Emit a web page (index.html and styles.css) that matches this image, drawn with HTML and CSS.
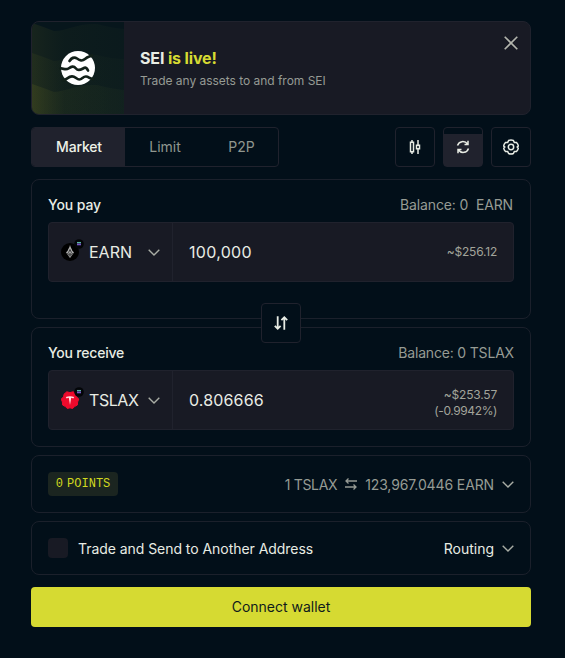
FILE: index.html
```
<!DOCTYPE html>
<html lang="en">
<head>
    <meta charset="UTF-8">
    <title>Swap</title>
    <link rel="stylesheet" href="styles.css">
</head>
<body>
<main class="swap">
    <section class="banner">
        <div class="banner-art">
            <svg width="92" height="92" viewBox="0 0 92 92">
                <defs>
                    <linearGradient id="wave" x1="0" y1="0" x2="1" y2="0">
                        <stop offset="0" stop-color="#434b20" stop-opacity=".6"/>
                        <stop offset=".35" stop-color="#26341f" stop-opacity=".45"/>
                        <stop offset="1" stop-color="#1b2c22" stop-opacity=".4"/>
                    </linearGradient>
                </defs>
                <rect width="92" height="92" fill="#07161c"/>
                <path d="M0 1Q12 5 22 9C35 9 45 1 65 2Q80 6 92 7V92H0Z" fill="url(#wave)" opacity=".45"/>
                <path d="M0 31Q12 35 22 39C35 38 45 31 65 33Q80 37 92 37V92H0Z" fill="url(#wave)" opacity=".4"/>
                <path d="M0 62Q12 66 22 70C35 69 45 62 65 63Q80 67 92 68V92H0Z" fill="url(#wave)" opacity=".8"/>
                <circle cx="46" cy="46" r="17" fill="#fff"/>
                <g fill="none" stroke="#122019" stroke-width="2.7" stroke-linecap="round" stroke-linejoin="round">
                    <path d="M37.5 39C39.5 36 42 34.5 45 36.5S50 39.5 53 37S57 35 60 33.5"/>
                    <path d="M28.5 46.5C31 46 33.5 48.5 36.5 46.5S41.5 43.5 44 46.5S49 47.5 51.5 46.2S55 46.5 56 48.5"/>
                    <path d="M31 58.5C34 58 36.5 54.3 40 54.3S44.5 57.5 47.3 57.5S51 54.3 54 54.5S57 56.5 61 57"/>
                </g>
            </svg>
        </div>
        <div class="banner-text">
            <h1>SEI <span>is live!</span></h1>
            <p>Trade any assets to and from SEI</p>
        </div>
        <button class="close" aria-label="Close">
            <svg width="14" height="14" viewBox="0 0 14 14"><path d="M.7.7l12.6 12.6M13.3.7L.7 13.3"/></svg>
        </button>
    </section>

    <div class="toolbar">
        <nav class="tabs">
            <a class="tab tab-market active">Market</a>
            <a class="tab tab-limit">Limit</a>
            <a class="tab tab-p2p">P2P</a>
        </nav>
        <div class="tools">
            <button class="tool" aria-label="Chart">
                <svg width="16" height="16" viewBox="0 0 16 16"><path d="M5 1v2M5 13v2M3.5 3.2h3v9.6h-3zM11 1v5M11 10v5M9.5 6.2h3v3.6h-3z"/></svg>
            </button>
            <button class="tool tool-refresh" aria-label="Refresh">
                <svg width="16" height="16" viewBox="0 0 16 16"><path d="M2.5 6.5C4 2 9.5 1.2 12.7 5M13 1.8v3.6H9.5M13.5 9.5C12 14 6.5 14.8 3.3 11M3 14.2v-3.6h3.5"/></svg>
            </button>
            <button class="tool" aria-label="Settings">
                <svg width="16" height="16" viewBox="0 0 16 16"><path d="M5.6 1.5Q8 .5 10.4 1.5L11.3 3.4L13.5 3.5Q15.2 5.2 15.3 7L14.2 8L15.3 9Q15.2 10.8 13.5 12.5L11.3 12.6L10.4 14.5Q8 15.5 5.6 14.5L4.7 12.6L2.5 12.5Q.8 10.8.7 9L1.8 8L.7 7Q.8 5.2 2.5 3.5L4.7 3.4Z"/><circle cx="8" cy="8" r="2.7"/></svg>
            </button>
        </div>
    </div>

    <section class="panel panel-pay">
        <div class="panel-head">
            <h2>You pay</h2>
            <span class="balance balance-pay">Balance: 0&nbsp; EARN</span>
        </div>
        <div class="field">
            <button class="token">
                <svg class="token-icon" width="23" height="23" viewBox="0 0 23 23">
                    <circle cx="9" cy="13" r="9" fill="#000"/>
                    <path d="M9 6C9.6 9 11 9.5 11.2 11.5L13 13.5L9 19L5 13.5L6.8 11.5C7 9.5 8.6 9 9 6Z" fill="#aaa"/>
                    <path d="M9 10.5L7.6 13.5L9 16L10.4 13.5ZM5.8 14l3.2 3.3 3.2-3.3" fill="none" stroke="#222" stroke-width=".8"/>
                    <circle cx="18" cy="5" r="4.8" fill="#030508"/>
                    <path d="M16 3.6h4" stroke="#58baa4" stroke-width="1.3"/>
                    <path d="M16 5.4h4" stroke="#7657c4" stroke-width="1.8"/>
                </svg>
                <span class="symbol symbol-earn">EARN</span>
                <svg class="chevron" width="12" height="7" viewBox="0 0 12 7"><path d="M.7.7L6 6L11.3.7"/></svg>
            </button>
            <div class="amount amount-pay">100,000</div>
            <div class="value">~$256.12</div>
        </div>
        <button class="switch" aria-label="Switch tokens">
            <svg width="16" height="16" viewBox="0 0 16 16"><path d="M4.7 1.3v12M1.8 10.8l2.9 3 2.9-3M11.3 14.7v-12M8.4 5.2l2.9-3 2.9 3"/></svg>
        </button>
    </section>

    <section class="panel">
        <div class="panel-head">
            <h2 class="receive-title">You receive</h2>
            <span class="balance balance-receive">Balance: 0 TSLAX</span>
        </div>
        <div class="field">
            <button class="token">
                <svg class="token-icon" width="23" height="23" viewBox="0 0 23 23">
                    <path d="M5.8 4.8L9 5.6L12.2 4.8L15 7.2L15.4 9.8L17.8 12L16.6 15L16.4 18L13.5 19.6L11.7 21.5L9 20.8L6.3 21.5L4.5 19.6L1.6 18L1.4 15L.2 12L2.6 9.8L3 7.2Z" fill="#ed0a2c" stroke="#ed0a2c" stroke-linejoin="round"/>
                    <path d="M4.8 10Q9 8.5 13.2 10L12.3 11.4Q11 10.8 10.2 10.8L9 18L7.8 10.8Q7 10.8 5.7 11.4Z" fill="#ffe3e3"/>
                    <circle cx="18" cy="5" r="4.8" fill="#030508"/>
                    <path d="M16 3.6h4" stroke="#58baa4" stroke-width="1.3"/>
                    <path d="M16 5.4h4" stroke="#7657c4" stroke-width="1.8"/>
                </svg>
                <span class="symbol symbol-tslax">TSLAX</span>
                <svg class="chevron" width="12" height="7" viewBox="0 0 12 7"><path d="M.7.7L6 6L11.3.7"/></svg>
            </button>
            <div class="amount amount-receive">0.806666</div>
            <div class="value value-receive">~$253.57<br><span class="change">(-0.9942%)</span></div>
        </div>
    </section>

    <section class="row row-rate">
        <span class="points">0 POINTS</span>
        <div class="rate">
            <span class="rate-from">1 TSLAX</span>
            <svg class="rate-icon" width="12" height="12" viewBox="0 0 12 12"><path d="M12 3H1M3.5.5L1 3l2.5 2.5M0 9h11M8.5 6.5L11 9l-2.5 2.5"/></svg>
            <span class="rate-to">123,967.0446 EARN</span>
            <svg class="chevron" width="12" height="7" viewBox="0 0 12 7"><path d="M.7.7L6 6L11.3.7"/></svg>
        </div>
    </section>

    <section class="row row-send">
        <label class="send"><span class="checkbox"></span><span class="send-text">Trade and Send to Another Address</span></label>
        <div class="routing"><span>Routing</span>
            <svg class="chevron" width="12" height="7" viewBox="0 0 12 7"><path d="M.7.7L6 6L11.3.7"/></svg>
        </div>
    </section>

    <button class="connect">Connect wallet</button>
</main>
</body>
</html>
```
FILE: styles.css
```
* {
	box-sizing: border-box;
}

body {
	margin: 0;
	background-color: #020f19;
	color: #e8ece4;
	font-family: Inter, sans-serif;
	font-size: 14px;
}

h1, h2, p {
	margin: 0;
}

button {
	padding: 0;
	border: none;
	background: none;
	color: inherit;
	font: inherit;
	cursor: pointer;
}

svg {
	display: block;
	flex-shrink: 0;
}

.swap {
	width: 500px;
	margin: 21px 0 0 31px;
	display: flex;
	flex-direction: column;
	gap: 8px;
}

.banner {
	height: 94px;
	display: flex;
	border: 1px solid #20222d;
	border-radius: 8px;
	background-color: #181a24;
	overflow: hidden;
}

.banner-text {
	flex: 1;
	padding: 26px 0 0 16px;
}

.banner h1 {
	font-size: 16px;
	line-height: 20px;
	font-weight: 700;
	letter-spacing: -0.15px;
}

.banner h1 span {
	color: #d6da32;
}

.banner p {
	margin-top: 5px;
	font-size: 12px;
	line-height: 16px;
	letter-spacing: -0.03px;
	color: #969b94;
}

.close {
	align-self: flex-start;
	margin: 14px 12px 0 0;
}

.close path {
	fill: none;
	stroke: #b3b5ad;
	stroke-width: 1.6;
}

.toolbar {
	display: flex;
	justify-content: space-between;
	margin: 4px 0;
}

.tabs {
	display: flex;
	width: 248px;
	height: 40px;
	border: 1px solid #20222d;
	border-radius: 4px;
	overflow: hidden;
}

.tab {
	display: flex;
	align-items: center;
	justify-content: center;
	padding-bottom: 2px;
	color: #90968f;
}

.tab-market {
	width: 93px;
	padding-left: 1px;
	letter-spacing: -0.15px;
}

.tab-limit {
	width: 80px;
}

.tab-p2p {
	width: 73px;
}

.tab.active {
	background-color: #20222d;
	color: #eef2e8;
	font-weight: 500;
}

.tools {
	display: flex;
	gap: 8px;
}

.tool {
	width: 40px;
	height: 40px;
	display: flex;
	align-items: center;
	justify-content: center;
	border: 1px solid #20222d;
	border-radius: 4px;
}

.tool path, .tool circle, .switch path {
	fill: none;
	stroke: #e8ece4;
	stroke-width: 1.5;
}

/* countdown to the next quote */
.tool-refresh {
	background: linear-gradient(to top, #20222d 32px, transparent 32px);
}

.panel {
	border: 1px solid #1b202b;
	border-radius: 8px;
	padding: 16px;
}

.panel-pay {
	position: relative;
	padding-bottom: 36px;
}

.panel-head {
	height: 18px;
	margin-bottom: 8px;
	padding-bottom: 2px;
	display: flex;
	justify-content: space-between;
	align-items: center;
}

.panel-head h2 {
	font-size: 14px;
	font-weight: 500;
	letter-spacing: -0.1px;
}

.panel-head .receive-title {
	letter-spacing: -0.2px;
}

.balance {
	color: #969b94;
}

.balance-pay {
	margin-right: 1px;
	letter-spacing: -0.13px;
}

.balance-receive {
	letter-spacing: -0.18px;
}

.field {
	height: 60px;
	display: flex;
	align-items: center;
	border: 1px solid #20222d;
	border-radius: 4px;
	background-color: #181a24;
}

.token {
	width: 124px;
	height: 58px;
	padding: 0 12px;
	display: flex;
	align-items: center;
	border-right: 1px solid #20222d;
}

.token-icon {
	margin-bottom: 4px;
}

.symbol {
	margin-left: 5px;
	margin-bottom: 1px;
	font-size: 16px;
}

.symbol-tslax {
	letter-spacing: -0.45px;
}

.chevron {
	margin-left: auto;
}

.chevron path {
	fill: none;
	stroke: #a9ada5;
	stroke-width: 1.4;
}

.amount {
	flex: 1;
	padding-left: 16px;
	font-size: 16px;
}

.amount-pay {
	letter-spacing: 0.3px;
}

.amount-receive {
	letter-spacing: 0.15px;
}

.value {
	padding-right: 16px;
	font-size: 12px;
	line-height: 16px;
	letter-spacing: -0.2px;
	text-align: right;
	color: #a2a49b;
}

.value-receive {
	padding-top: 6px;
}

.change {
	letter-spacing: -0.4px;
}

.switch {
	position: absolute;
	left: 229px;
	bottom: -25px;
	z-index: 1;
	width: 40px;
	height: 40px;
	display: flex;
	align-items: center;
	justify-content: center;
	border: 1px solid #20222d;
	border-radius: 4px;
	background-color: #020f19;
}

.switch path {
	stroke-width: 1.8;
}

.row {
	padding: 0 16px;
	display: flex;
	justify-content: space-between;
	align-items: center;
	border: 1px solid #1b202b;
	border-radius: 8px;
}

.row-rate {
	height: 58px;
}

.row-send {
	height: 54px;
}

.points {
	width: 70px;
	height: 24px;
	border-radius: 4px;
	background-color: #1b2520;
	color: #d1d91f;
	font-family: "Liberation Mono", monospace;
	font-size: 12px;
	line-height: 25px;
	text-align: center;
	word-spacing: -3px;
}

.rate, .routing, .send {
	display: flex;
	align-items: center;
}

.rate {
	color: #969b94;
}

.rate-from {
	letter-spacing: -0.35px;
}

.rate-to {
	letter-spacing: -0.12px;
}

.rate-icon {
	margin: 0 8px;
}

.rate-icon path {
	fill: none;
	stroke: #969b94;
	stroke-width: 1.3;
}

.rate .chevron, .routing .chevron {
	margin-left: 8px;
}

.checkbox {
	width: 20px;
	height: 20px;
	margin-right: 10px;
	border-radius: 4px;
	background-color: #181a24;
}

.send-text {
	letter-spacing: -0.05px;
}

.connect {
	height: 40px;
	margin-top: 4px;
	padding-bottom: 1px;
	border-radius: 4px;
	background-color: #d6da32;
	color: #101b1c;
}
```
